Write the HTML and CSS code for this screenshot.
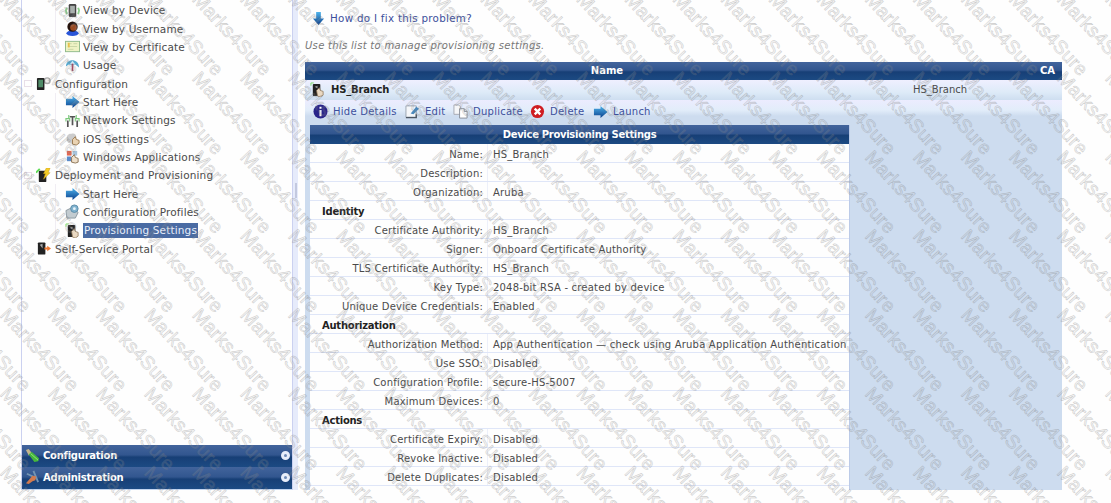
FILE: index.html
```html
<!DOCTYPE html>
<html lang="en">
<head>
<meta charset="UTF-8">
<meta name="viewport" content="width=device-width, initial-scale=1.0">
<title>Provisioning Settings</title>
<link rel="stylesheet" href="styles.css">
</head>
<body>

<!-- shared icons -->
<svg class="defs">
    <linearGradient id="blue" x1="0" y1="0" x2="0" y2="1">
        <stop offset="0" stop-color="#4fb4ec"/><stop offset="1" stop-color="#0a3f8c"/>
    </linearGradient>
    <symbol id="arrow" viewBox="0 0 16 16">
        <path d="M1 5h7V2l7.500 6.500-7.500 6.500v-3H1z" fill="url(#blue)"/>
    </symbol>
    <symbol id="phone-hand" viewBox="0 0 16 16">
        <path d="M1 4V1h3" fill="none" stroke="#7ee06c"/>
        <rect x="3" y="2" width="8" height="13" rx="1" fill="#222"/>
        <path d="M5 5l3-1v3z" fill="#999"/>
        <path d="M7 9l3-3 1 3 3 1v4l-3 2-3-1z" fill="#ead9c2" stroke="#8b7355" stroke-width=".8"/>
    </symbol>
</svg>

<div class="page">
    <div class="sidebar">
        <ul class="tree">
            <li class="sub"><svg class="icon" viewBox="0 0 16 16"><path d="M2 5l-1 3 1 4M14 5l1 3-1 4" fill="none" stroke="#8ed08e" stroke-width="2"/><rect x="4" y="1" width="8" height="14" rx="1.500" fill="#444"/><rect x="5.500" y="3" width="5" height="8" fill="#a9b0ad"/></svg><span>View by Device</span></li>
            <li class="sub"><svg class="icon" viewBox="0 0 16 16"><ellipse cx="8" cy="13" rx="6.500" ry="3" fill="#2a55d8"/><circle cx="8" cy="6" r="5.500" fill="#25130c"/><circle cx="9" cy="7" r="3.500" fill="#9c4a20"/></svg><span>View by Username</span></li>
            <li class="sub"><svg class="icon" viewBox="0 0 16 16"><rect x=".5" y="2.500" width="15" height="11" fill="#eef3c4" stroke="#8fb98a"/><path d="M3 5h4M9 5h4M3 8h10M3 11h6" stroke="#c9d4a4"/><path d="M4 4v5" stroke="#e8c04a" stroke-width="2"/></svg><span>View by Certificate</span></li>
            <li class="sub"><svg class="icon" viewBox="0 0 16 16"><path d="M1 9c0-9 14-9 14 1l-4-3-3 1-4-1z" fill="#58a9cf"/><path d="M5 7l3-4 3 4" fill="#cfe9f5"/><path d="M8 6v8" stroke="#a44760" stroke-width="1.800"/></svg><span>Usage</span></li>
            <li class="top"><i class="toggle"></i><svg class="icon" viewBox="0 0 16 16"><circle cx="12" cy="5" r="3" fill="#eee" stroke="#aaa" stroke-width="1.500"/><rect x="1" y="2" width="8" height="13" rx="1" fill="#222"/><rect x="2.500" y="4" width="5" height="8" fill="#4f8b68"/></svg><span>Configuration</span></li>
            <li class="sub"><svg class="icon"><use href="#arrow"/></svg><span>Start Here</span></li>
            <li class="sub"><svg class="icon" viewBox="0 0 16 16"><path d="M3 15V8M13 15V8M8 13V4M5 4h6" stroke="#555" stroke-width="1.800"/><path d="M1 9V6h4v3M11 9V6h4v3M4 2v4M12 2v4" fill="none" stroke="#7bc97b" stroke-width="1.200"/></svg><span>Network Settings</span></li>
            <li class="sub"><svg class="icon" viewBox="0 0 16 16"><path d="M7 3c3-1 5 1 5 3v6c-2 3-4 2-5 1-4 1-6-3-5-7 1-3 4-3 5-3z" fill="#ccc"/><path d="M8 9l3-3 1 3 3 1v3l-3 2-4-1z" fill="#ead3b2" stroke="#9b7a50"/></svg><span>iOS Settings</span></li>
            <li class="sub"><svg class="icon" viewBox="0 0 16 16"><path d="M2 2h5v5H2z" fill="#e6674f"/><path d="M8 2h5v5H8z" fill="#a8c4dc"/><path d="M2 8h5v5H2z" fill="#5b8bc9"/><path d="M7 9l3-3 1 3 3 1v4l-3 1-4-1z" fill="#eedfca" stroke="#8b7355"/></svg><span>Windows Applications</span></li>
            <li class="top"><i class="toggle"></i><svg class="icon" viewBox="0 0 16 16"><path d="M0 5l4-4" stroke="#5edc55" stroke-width="2"/><rect x="3" y="3" width="8" height="12" rx="1" fill="#222"/><path d="M11 0h4l-2 5h2l-7 7 2-6H8z" fill="#f5cd27" stroke="#c99a14" stroke-width=".5"/></svg><span>Deployment and Provisioning</span></li>
            <li class="sub"><svg class="icon"><use href="#arrow"/></svg><span>Start Here</span></li>
            <li class="sub"><svg class="icon" viewBox="0 0 16 16"><path d="M1 7l6-3 7 5-3 6H2z" fill="#c2cbd0" stroke="#8b989f"/><circle cx="10" cy="5" r="4" fill="#7fb2cf" stroke="#5c8ba6"/><circle cx="10" cy="5" r="1.500" fill="#e9f4fa"/></svg><span>Configuration Profiles</span></li>
            <li class="sub"><svg class="icon"><use href="#phone-hand"/></svg><span class="selected">Provisioning Settings</span></li>
            <li class="top last"><svg class="icon" viewBox="0 0 16 16"><rect x="2" y="1.500" width="8" height="13" rx="1" fill="#222"/><path d="M4 4l3-1v5z" fill="#aaa"/><path d="M9 7h3V5l4 3-4 3V9H9z" fill="#ee7b35"/></svg><span>Self-Service Portal</span></li>
        </ul>
        <div class="bar"><svg class="icon" viewBox="0 0 16 16"><path d="M1 2l3-1 3 4-3 3z" fill="#c4b58d"/><path d="M4 7l3-3 8 7-1 3-4 1z" fill="#45b63c"/><path d="M6 6l8 7" stroke="#95e27c"/></svg><span>Configuration</span><i class="knob"></i></div>
        <div class="bar"><svg class="icon" viewBox="0 0 16 16"><path d="M9 1l5 12M2 4l11 5" stroke="#7494b3" stroke-width="2"/><path d="M1 14l7-8 4 1-1 4-3 1-4 3z" fill="#d27a4e"/></svg><span>Administration</span><i class="knob"></i></div>
    </div>
    <div class="divider"><i></i></div>

    <div class="content">
        <div class="help"><svg class="icon" viewBox="0 0 16 16"><path d="M5.500 1v7H2l6 7 6-7h-3.500V1z" fill="url(#blue)"/></svg><a>How do I fix this problem?</a></div>
        <p class="intro">Use this list to manage provisioning settings.</p>
        <div class="list">
            <div class="list-head"><span class="col-name">Name</span><span class="col-ca">CA</span></div>
            <div class="list-row"><svg class="icon"><use href="#phone-hand"/></svg><b>HS_Branch</b><span>HS_Branch</span></div>
            <div class="details">
                <div class="actions">
                    <svg class="icon" viewBox="0 0 16 16"><circle cx="8" cy="8" r="7.500" fill="#29248a"/><path d="M8 3v2M8 6.500V13" stroke="#fff" stroke-width="2.200"/></svg><a class="a-hide">Hide Details</a>
                    <svg class="icon" viewBox="0 0 16 16"><path d="M1 2h11v12H1z" fill="#f5f7fa" stroke="#9aa3b0"/><path d="M1 14.500h11V11" fill="none" stroke="#4c5663" stroke-width="1.500"/><path d="M6 10l6-7 3 2-6 6z" fill="#4a88bd"/></svg><a class="a-edit">Edit</a>
                    <svg class="icon" viewBox="0 0 16 16"><path d="M1 1h5l2 2v8H1z" fill="#f5f6f8" stroke="#a5a9b1"/><path d="M7 5h5l3 3v7H7z" fill="#fff" stroke="#8a8f99"/><path d="M12 5v3h3" fill="none" stroke="#8a8f99"/></svg><a class="a-dup">Duplicate</a>
                    <svg class="icon" viewBox="0 0 16 16"><circle cx="8" cy="8" r="7" fill="#cf1d22"/><path d="M5 5l6 6M11 5l-6 6" stroke="#fff" stroke-width="2.500"/></svg><a class="a-del">Delete</a>
                    <svg class="icon"><use href="#arrow"/></svg><a>Launch</a>
                </div>
                <div class="panel">
                    <div class="panel-head">Device Provisioning Settings</div>
                    <div class="field"><label>Name:</label><span>HS_Branch</span></div>
                    <div class="field"><label>Description:</label><span></span></div>
                    <div class="field"><label>Organization:</label><span>Aruba</span></div>
                    <div class="field group">Identity</div>
                    <div class="field"><label>Certificate Authority:</label><span>HS_Branch</span></div>
                    <div class="field"><label>Signer:</label><span>Onboard Certificate Authority</span></div>
                    <div class="field"><label>TLS Certificate Authority:</label><span>HS_Branch</span></div>
                    <div class="field"><label>Key Type:</label><span>2048-bit RSA - created by device</span></div>
                    <div class="field"><label>Unique Device Credentials:</label><span>Enabled</span></div>
                    <div class="field group">Authorization</div>
                    <div class="field"><label>Authorization Method:</label><span>App Authentication — check using Aruba Application Authentication</span></div>
                    <div class="field"><label>Use SSO:</label><span>Disabled</span></div>
                    <div class="field"><label>Configuration Profile:</label><span>secure-HS-5007</span></div>
                    <div class="field"><label>Maximum Devices:</label><span>0</span></div>
                    <div class="field group">Actions</div>
                    <div class="field"><label>Certificate Expiry:</label><span>Disabled</span></div>
                    <div class="field"><label>Revoke Inactive:</label><span>Disabled</span></div>
                    <div class="field"><label>Delete Duplicates:</label><span>Disabled</span></div>
                </div>
            </div>
        </div>
    </div>
</div>

<svg class="watermark" id="watermark" width="1111" height="503" aria-hidden="true"></svg>

<script src="script.js"></script>
</body>
</html>
```
FILE: styles.css
```css
* {
    box-sizing: border-box;
}
body {
    margin: 0;
    height: 503px;
    overflow: hidden;
    background-color: #fefefe;
    font-family: "DejaVu Sans", Verdana, sans-serif;
    font-size: 10px;
    color: #4a4a4a;
}
.defs {
    position: absolute;
    width: 0;
    height: 0;
}
.icon {
    width: 15px;
    height: 15px;
    flex: none;
}
.page {
    display: flex;
    height: 490px;
    padding-left: 21px;
}

/* left navigation */
.sidebar {
    width: 272px;
    display: flex;
    flex-direction: column;
    border-left: 1px solid #cbd1f0;
    border-right: 1px solid #cbd1f0;
    border-bottom: 1px solid #c3d5f0;
}
.tree {
    flex: 1;
    margin: 0;
    padding: 1px 0 0;
    list-style: none;
    font-size: 10.5px;
    letter-spacing: 0.15px;
}
.tree li {
    display: flex;
    align-items: center;
    height: 18.35px;
    white-space: nowrap;
}
.tree .top {
    padding-left: 2px;
    gap: 4px;
}
.tree .top.last {
    padding-left: 14px;
}
.tree .sub {
    margin-left: 33px;
    padding-left: 9px;
    gap: 3px;
    border-left: 1px solid #f0edf3;
}
.toggle {
    width: 8px;
    height: 7px;
    border: 1px solid #e8dfe8;
}
.tree .selected {
    background-color: #4a6ba3;
    color: #e8effc;
    line-height: 15px;
    padding: 0 1px;
}
.bar {
    display: flex;
    align-items: center;
    height: 22px;
    padding: 0 2px 2px 3px;
    gap: 3px;
    background: linear-gradient(#42649c, #32568f 45%, #173f76 55%, #1c4a83);
    color: #fff;
    font-weight: bold;
    letter-spacing: -0.25px;
}
.knob {
    width: 9px;
    height: 9px;
    margin-left: auto;
    border: 3px solid #e8eefa;
    border-radius: 50%;
    background-color: #6d89b5;
}
.divider {
    width: 5px;
    margin-right: 7px;
    padding: 183px 0 0 2px;
    background-color: #e6ebfb;
}
.divider i {
    display: block;
    width: 2px;
    height: 15px;
    background-color: #c3c9df;
}

/* main content */
.content {
    width: 757px;
}
.content a {
    color: #3c4f9c;
}
.help {
    display: flex;
    align-items: center;
    gap: 4px;
    height: 36px;
    padding-left: 6px;
    font-size: 10.3px;
    letter-spacing: 0.3px;
}
.intro {
    margin: 0;
    height: 26px;
    line-height: 20px;
    font-style: italic;
    letter-spacing: 0.3px;
    color: #777;
}
.list-head,
.panel-head {
    background: linear-gradient(#42649c, #32568f 45%, #173f76 55%, #1c4a83);
    color: #fff;
    font-weight: bold;
}
.list-head {
    display: flex;
    height: 18px;
    line-height: 18px;
}
.col-name {
    width: 604px;
    text-align: center;
}
.col-ca {
    flex: 1;
    padding-right: 7px;
    text-align: right;
}
.list-row {
    display: flex;
    align-items: center;
    height: 20px;
    padding: 0 0 2px 5px;
    background: linear-gradient(#efefff, #deebf8 60%, #cedef0);
}
.list-row b {
    width: 588px;
    padding-left: 6px;
    letter-spacing: -0.2px;
    color: #222;
}
.details {
    height: 390px;
    padding-left: 5px;
    background: linear-gradient(#ececff, #e2edfa 10px, #cddcef 16px);
}
.actions {
    display: flex;
    align-items: center;
    height: 25px;
    padding: 0 0 3px 3px;
    gap: 5px;
    letter-spacing: 0.25px;
}
.actions .a-hide {
    width: 67px;
}
.actions .a-edit {
    width: 23px;
}
.actions .a-dup {
    width: 52px;
}
.actions .a-del {
    width: 38px;
}
.panel {
    width: 540px;
    height: 365px;
    background-color: #fefefe;
    border-right: 1px solid #bccbe8;
}
.panel-head {
    height: 18.5px;
    line-height: 19px;
    letter-spacing: -0.3px;
    text-align: center;
}
.field {
    display: flex;
    height: 19.06px;
    line-height: 21px;
    letter-spacing: 0.2px;
    border-bottom: 1px solid #dfe6f8;
    white-space: nowrap;
}
.field label {
    width: 178px;
    padding-right: 4px;
    text-align: right;
    border-right: 1px solid #edf0fa;
}
.field span {
    padding-left: 5px;
}
.field.group {
    padding-left: 12px;
    font-weight: bold;
    letter-spacing: -0.25px;
    color: #222;
}

/* tiled mark over the whole page */
.watermark {
    position: absolute;
    left: 0;
    top: 0;
    opacity: 0.4;
    pointer-events: none;
    font-family: "Liberation Sans", Arial, sans-serif;
    font-size: 19px;
    letter-spacing: 0.3px;
}
.watermark text {
    fill: rgba(190, 190, 190, 0.35);
    stroke: #777;
    stroke-width: 0.5px;
}
```
FILE: script.js
```js
var mark = document.getElementById("watermark");

// repeat the mark every 48px across and 79px down
for (var row = -1; row < 6; row++) {
    for (var col = -1; col < 24; col++) {
        var x = -1 + col * 48.05;
        var y = 79 + row * 78.9;
        var text = document.createElementNS("http://www.w3.org/2000/svg", "text");
        text.setAttribute("transform", "translate(" + x + " " + y + ") rotate(47)");
        text.textContent = "Marks4Sure";
        mark.appendChild(text);
    }
}
```
